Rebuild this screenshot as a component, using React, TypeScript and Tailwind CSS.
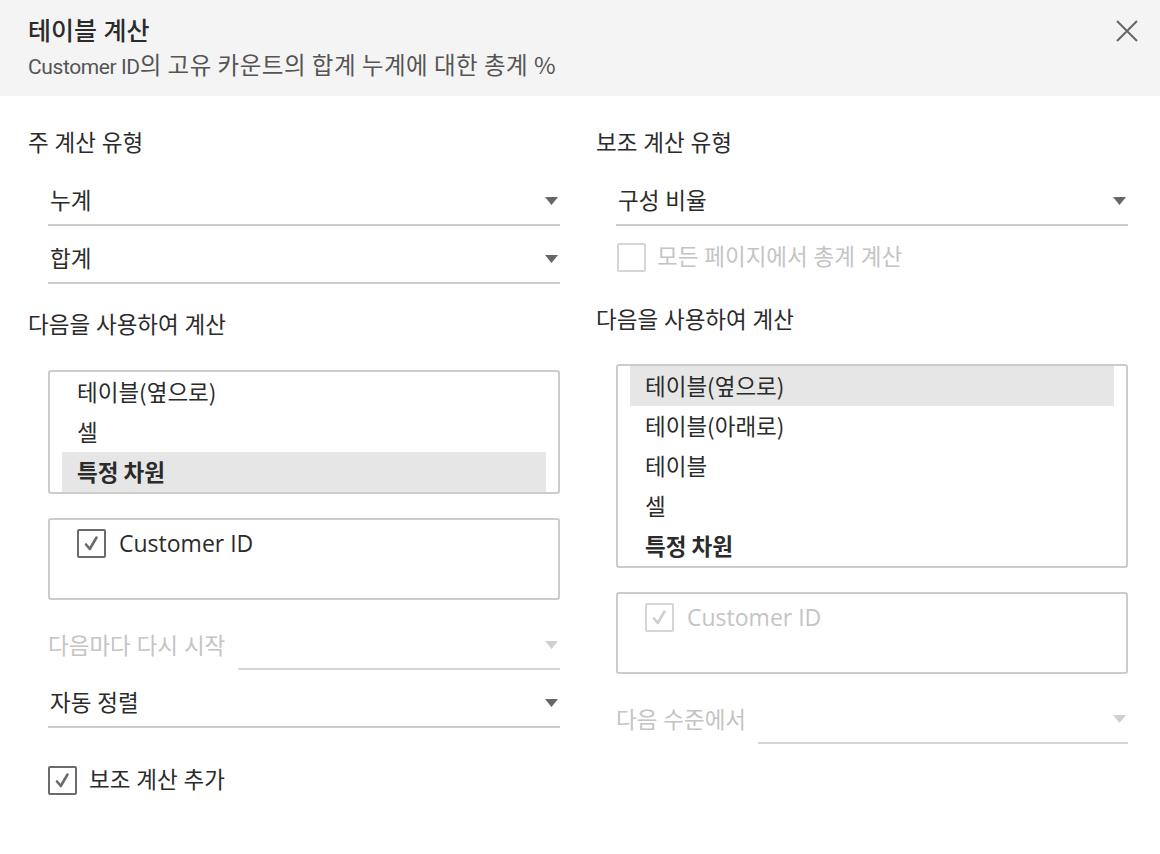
import React from "react";

const FONT = { fontFamily: "'Open Sans', 'Noto Sans CJK KR', sans-serif" };

function Tri({ disabled }: { disabled?: boolean }) {
  return (
    <svg width="13" height="8" viewBox="0 0 13 8" className="shrink-0">
      <path d="M0 0 L13 0 L6.5 8 Z" fill={disabled ? "#d0d0d0" : "#666666"} />
    </svg>
  );
}

function Check({ disabled, checked }: { disabled?: boolean; checked?: boolean }) {
  return (
    <div
      className={
        "w-[29px] h-[29px] shrink-0 rounded-[2px] border-2 flex items-center justify-center " +
        (disabled ? "border-[#d6d6d6]" : "border-[#6b6b6b]")
      }
    >
      {checked && (
        <svg width="17" height="17" viewBox="0 0 17 17">
          <path
            d="M3 9.5 L6.8 14 L13.5 2.5"
            fill="none"
            stroke={disabled ? "#cfcfcf" : "#6b6b6b"}
            strokeWidth="2.6"
            strokeLinecap="round"
            strokeLinejoin="round"
          />
        </svg>
      )}
    </div>
  );
}

function Select({ value, className = "" }: { value: string; className?: string }) {
  return (
    <div className={"h-[48px] flex items-center justify-between border-b-2 border-[#cccccc] pl-[2px] pr-[2px] " + className}>
      <span className="text-[22.5px] text-[#2b2b2b]">{value}</span>
      <Tri />
    </div>
  );
}

function Label({ text, className = "" }: { text: string; className?: string }) {
  return <div className={"h-[30px] leading-[30px] text-[22.5px] text-[#2b2b2b] " + className}>{text}</div>;
}

function ListBox({ items, selected, className = "" }: { items: string[]; selected: number; className?: string }) {
  return (
    <div className={"border-2 border-[#cccccc] rounded-[3px] px-[12px] overflow-hidden " + className}>
      {items.map((it, i) => (
        <div
          key={it + i}
          className={
            "h-[40px] flex items-center px-[15px] text-[22.5px] text-[#2b2b2b] " +
            (i === selected ? "bg-[#e6e6e6] " : "") +
            (i === items.length - 1 ? "font-bold" : "")
          }
          style={{ fontFamily: "'Noto Sans CJK KR', sans-serif" }}
        >
          {it}
        </div>
      ))}
    </div>
  );
}

function DimBox({ disabled }: { disabled?: boolean }) {
  return (
    <div className="h-[82px] border-2 border-[#cccccc] rounded-[3px] pl-[27px] pt-[6px]">
      <div className="flex items-center gap-[13px]">
        <Check checked disabled={disabled} />
        <span className={"text-[23px] " + (disabled ? "text-[#c4c4c4]" : "text-[#2b2b2b]")}>Customer ID</span>
      </div>
    </div>
  );
}

function LabeledSelect({ label, labelWidth }: { label: string; labelWidth: string }) {
  return (
    <div className="flex items-stretch h-[48px]">
      <div className={"flex items-center text-[22.5px] text-[#c4c4c4] " + labelWidth}>{label}</div>
      <div className="flex-1 flex items-center justify-end border-b-2 border-[#d6d6d6] pr-[2px]">
        <Tri disabled />
      </div>
    </div>
  );
}

export default function App() {
  return (
    <div className="w-[1160px] h-[854px] bg-white overflow-hidden" style={FONT}>
      <div className="h-[96px] bg-[#f4f4f4] flex justify-between pl-[28px] pr-[22px]">
        <div className="pt-[14px]">
          <div className="h-[32px] leading-[32px] text-[25px] font-medium text-[#2b2b2b]">테이블 계산</div>
          <div className="h-[32px] leading-[32px] text-[#555555] mt-[2px] whitespace-nowrap">
            <span className="text-[21px] tracking-[-0.4px]" style={{ fontFamily: "Roboto, sans-serif" }}>
              Customer ID
            </span>
            <span className="text-[23.5px] tracking-[0.5px]" style={{ fontFamily: "'Noto Sans CJK KR', sans-serif" }}>
              의 고유 카운트의 합계 누계에 대한 총계 %
            </span>
          </div>
        </div>
        <div className="pt-[20px]">
          <svg width="22" height="22" viewBox="0 0 22 22">
            <path d="M1 1 L21 21 M21 1 L1 21" stroke="#666666" strokeWidth="2" />
          </svg>
        </div>
      </div>

      <div className="flex pl-[28px] gap-[36px]">
        {/* Left column */}
        <div className="w-[532px] flex flex-col">
          <Label text="주 계산 유형" className="mt-[32px]" />
          <div className="pl-[20px] flex flex-col">
            <Select value="누계" className="mt-[20px]" />
            <Select value="합계" className="mt-[10px]" />
          </div>
          <Label text="다음을 사용하여 계산" className="mt-[26px]" />
          <div className="pl-[20px] flex flex-col">
            <ListBox
              className="mt-[30px] h-[124px]"
              items={["테이블(옆으로)", "셀", "특정 차원"]}
              selected={2}
            />
            <div className="mt-[24px]">
              <DimBox />
            </div>
            <div className="mt-[22px]">
              <LabeledSelect label="다음마다 다시 시작" labelWidth="w-[190px]" />
            </div>
            <Select value="자동 정렬" className="mt-[10px]" />
            <div className="mt-[37px] h-[30px] flex items-center gap-[12px]">
              <Check checked />
              <span className="text-[22.5px] text-[#2b2b2b]">보조 계산 추가</span>
            </div>
          </div>
        </div>

        {/* Right column */}
        <div className="w-[532px] flex flex-col">
          <Label text="보조 계산 유형" className="mt-[32px]" />
          <div className="pl-[20px] flex flex-col">
            <Select value="구성 비율" className="mt-[20px]" />
            <div className="mt-[17px] h-[28px] flex items-center gap-[11px] pl-[1px]">
              <Check disabled />
              <span className="text-[22.5px] text-[#c4c4c4]">모든 페이지에서 총계 계산</span>
            </div>
          </div>
          <Label text="다음을 사용하여 계산" className="mt-[34px]" />
          <div className="pl-[20px] flex flex-col">
            <ListBox
              className="mt-[29px] h-[204px]"
              items={["테이블(옆으로)", "테이블(아래로)", "테이블", "셀", "특정 차원"]}
              selected={0}
            />
            <div className="mt-[24px]">
              <DimBox disabled />
            </div>
            <div className="mt-[22px]">
              <LabeledSelect label="다음 수준에서" labelWidth="w-[142px]" />
            </div>
          </div>
        </div>
      </div>
    </div>
  );
}
